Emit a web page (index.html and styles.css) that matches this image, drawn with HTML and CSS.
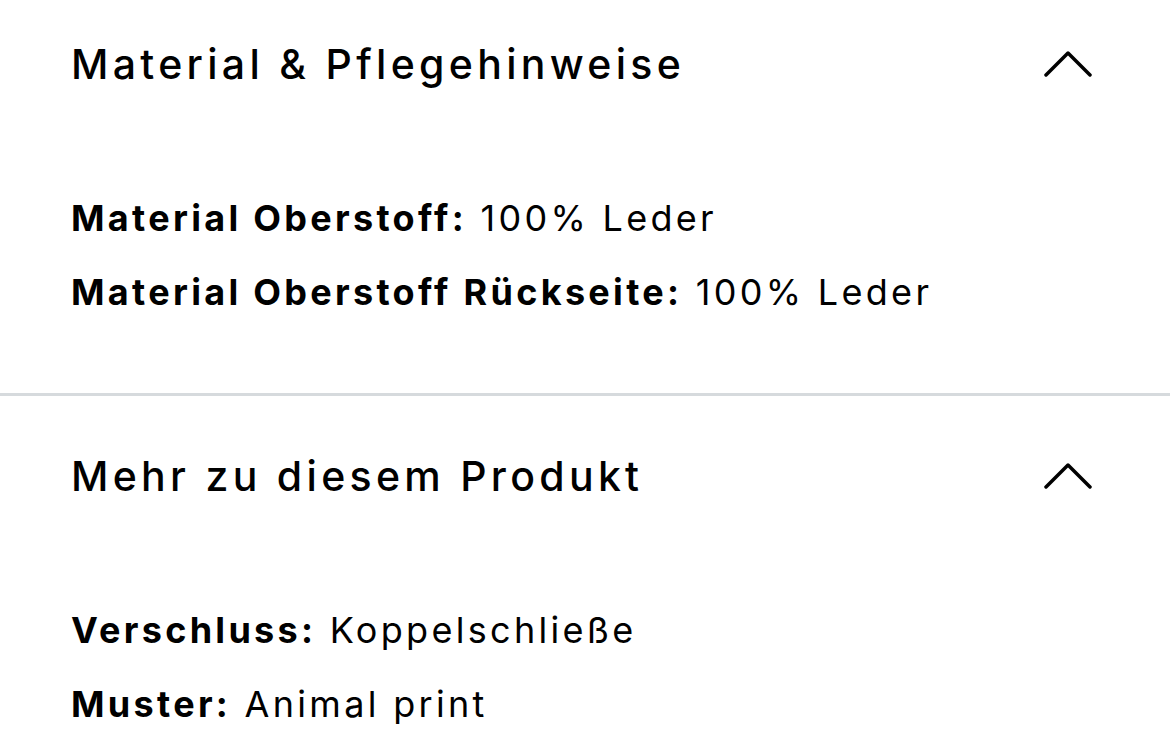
FILE: index.html
```html
<!DOCTYPE html>
<html lang="de">
<head>
	<meta charset="UTF-8">
	<title>Produktdetails</title>
	<link rel="stylesheet" href="styles.css">
</head>
<body>
<div class="details">
	<div class="section">
		<div class="section-head">
			<h2 class="section-title">Material &amp; Pflegehinweise</h2>
			<svg class="chevron" viewBox="0 0 48 26" width="48" height="26">
				<path d="M2 24 L24 2 L46 24" />
			</svg>
		</div>
		<ul class="attr-list">
			<li><b>Material Oberstoff:</b> 100% Leder</li>
			<li><b>Material Oberstoff Rückseite:</b> 100% Leder</li>
		</ul>
	</div>
	<div class="section">
		<div class="section-head">
			<h2 class="section-title">Mehr zu diesem Produkt</h2>
			<svg class="chevron" viewBox="0 0 48 26" width="48" height="26">
				<path d="M2 24 L24 2 L46 24" />
			</svg>
		</div>
		<ul class="attr-list">
			<li><b>Verschluss:</b> Koppelschließe</li>
			<li><b>Muster:</b> Animal print</li>
		</ul>
	</div>
</div>
</body>
</html>
```

FILE: styles.css
```css
body {
	margin: 0;
	background: #fff;
	color: #000;
	font-family: Inter, "Noto Sans", sans-serif;
	overflow: hidden;
}
ul {
	margin: 0;
	padding: 0;
	list-style: none;
}
/* list is scrolled a little, the first divider sits above the fold */
.details {
	margin-top: -19px;
}
.section {
	border-top: 3px solid #d6dadd;
	padding: 55px 78px 76px 71px;
}
.section-head {
	display: flex;
	align-items: center;
	justify-content: space-between;
}
.section-title {
	margin: 0;
	font-size: 41px;
	line-height: 50px;
	font-weight: 500;
	letter-spacing: 4.3px;
}
.chevron {
	fill: none;
	stroke: #000;
	stroke-width: 3.5;
	stroke-linecap: round;
	stroke-linejoin: round;
}
.attr-list {
	margin-top: 104px;
	display: flex;
	flex-direction: column;
	gap: 24px;
}
.attr-list li {
	font-size: 36px;
	line-height: 50px;
	letter-spacing: 3.3px;
}
.attr-list b {
	font-weight: 700;
}
```
